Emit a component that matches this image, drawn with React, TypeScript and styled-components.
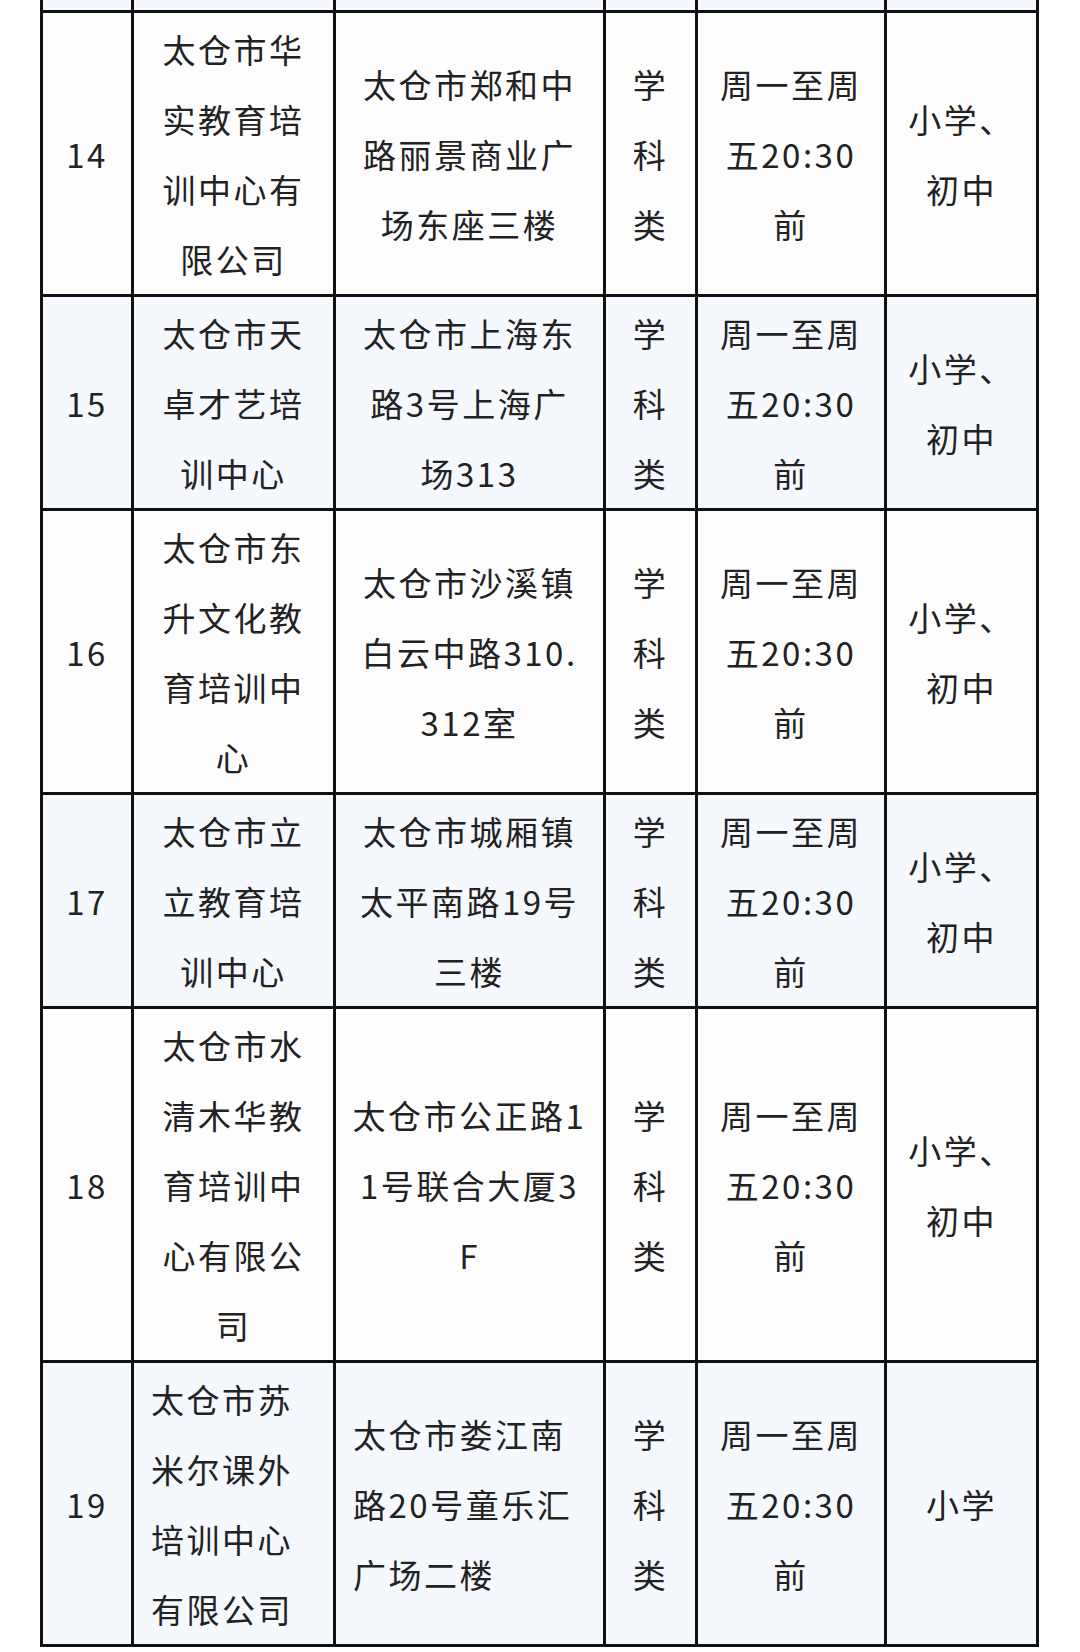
import React from "react";
import styled, { createGlobalStyle } from "styled-components";

const GlobalStyle = createGlobalStyle`
  html, body {
    margin: 0;
    padding: 0;
    background: #ffffff;
  }
  body {
    font-family: "Noto Sans CJK SC", "Noto Sans", sans-serif;
  }
`;

type Row = {
  no: string;
  name: string[];
  addr: string[];
  level: string[];
  left?: boolean;
};

const TYPE = ["学", "科", "类"];
const TIME = ["周一至周", "五20:30", "前"];

const rows: Row[] = [
  {
    no: "14",
    name: ["太仓市华", "实教育培", "训中心有", "限公司"],
    addr: ["太仓市郑和中", "路丽景商业广", "场东座三楼"],
    level: ["小学、", "初中"],
  },
  {
    no: "15",
    name: ["太仓市天", "卓才艺培", "训中心"],
    addr: ["太仓市上海东", "路3号上海广", "场313"],
    level: ["小学、", "初中"],
  },
  {
    no: "16",
    name: ["太仓市东", "升文化教", "育培训中", "心"],
    addr: ["太仓市沙溪镇", "白云中路310.", "312室"],
    level: ["小学、", "初中"],
  },
  {
    no: "17",
    name: ["太仓市立", "立教育培", "训中心"],
    addr: ["太仓市城厢镇", "太平南路19号", "三楼"],
    level: ["小学、", "初中"],
  },
  {
    no: "18",
    name: ["太仓市水", "清木华教", "育培训中", "心有限公", "司"],
    addr: ["太仓市公正路1", "1号联合大厦3", "F"],
    level: ["小学、", "初中"],
  },
  {
    no: "19",
    name: ["太仓市苏", "米尔课外", "培训中心", "有限公司"],
    addr: ["太仓市娄江南", "路20号童乐汇", "广场二楼"],
    level: ["小学"],
    left: true,
  },
];

// widths measured centre-to-centre of the rules
const COLS = [91, 202, 270, 92, 189, 152];

function Lines({ lines }: { lines: string[] }) {
  return (
    <>
      {lines.map((l, i) => (
        <Line key={i}>{l}</Line>
      ))}
    </>
  );
}

export default function App() {
  return (
    <Page>
      <GlobalStyle />
      <Table>
        <colgroup>
          {COLS.map((w, i) => (
            <col key={i} style={{ width: w }} />
          ))}
        </colgroup>
        <tbody>
          {/* tail of row 13, cut off at the top of the screenshot */}
          <tr>
            {COLS.map((_, i) => (
              <Sliver key={i} />
            ))}
          </tr>
          {rows.map((r, idx) => {
            const shaded = idx % 2 === 1;
            return (
              <tr key={r.no}>
                <Cell $shaded={shaded}>
                  <Line>{r.no}</Line>
                </Cell>
                <Cell $shaded={shaded} $left={r.left}>
                  <Lines lines={r.name} />
                </Cell>
                <Cell $shaded={shaded} $left={r.left}>
                  <Lines lines={r.addr} />
                </Cell>
                <Cell $shaded={shaded}>
                  <Lines lines={TYPE} />
                </Cell>
                <Cell $shaded={shaded}>
                  <Lines lines={TIME} />
                </Cell>
                <Cell $shaded={shaded}>
                  <Lines lines={r.level} />
                </Cell>
              </tr>
            );
          })}
        </tbody>
      </Table>
    </Page>
  );
}

const Page = styled.div`
  width: 1080px;
  height: 1652px;
  padding-left: 40px;
  box-sizing: border-box;
  overflow: hidden;
  background: #ffffff;
`;

const Table = styled.table`
  border-collapse: collapse;
  table-layout: fixed;
  width: 999px;
  color: #222222;
  font-size: 33px;
  letter-spacing: 2.5px;
`;

const Sliver = styled.td`
  height: 10px;
  padding: 0;
  background: #f5f8fd;
  border: 3px solid #111111;
  border-top: none;
`;

const Cell = styled.td<{ $shaded?: boolean; $left?: boolean }>`
  padding: ${(p) => (p.$left ? "1px 0 0 17px" : "1px 0 0")};
  border: 3px solid #111111;
  background: ${(p) => (p.$shaded ? "#f5f8fd" : "#fdfdfe")};
  text-align: ${(p) => (p.$left ? "left" : "center")};
  vertical-align: middle;
`;

const Line = styled.div`
  line-height: 70px;
  white-space: nowrap;
`;
